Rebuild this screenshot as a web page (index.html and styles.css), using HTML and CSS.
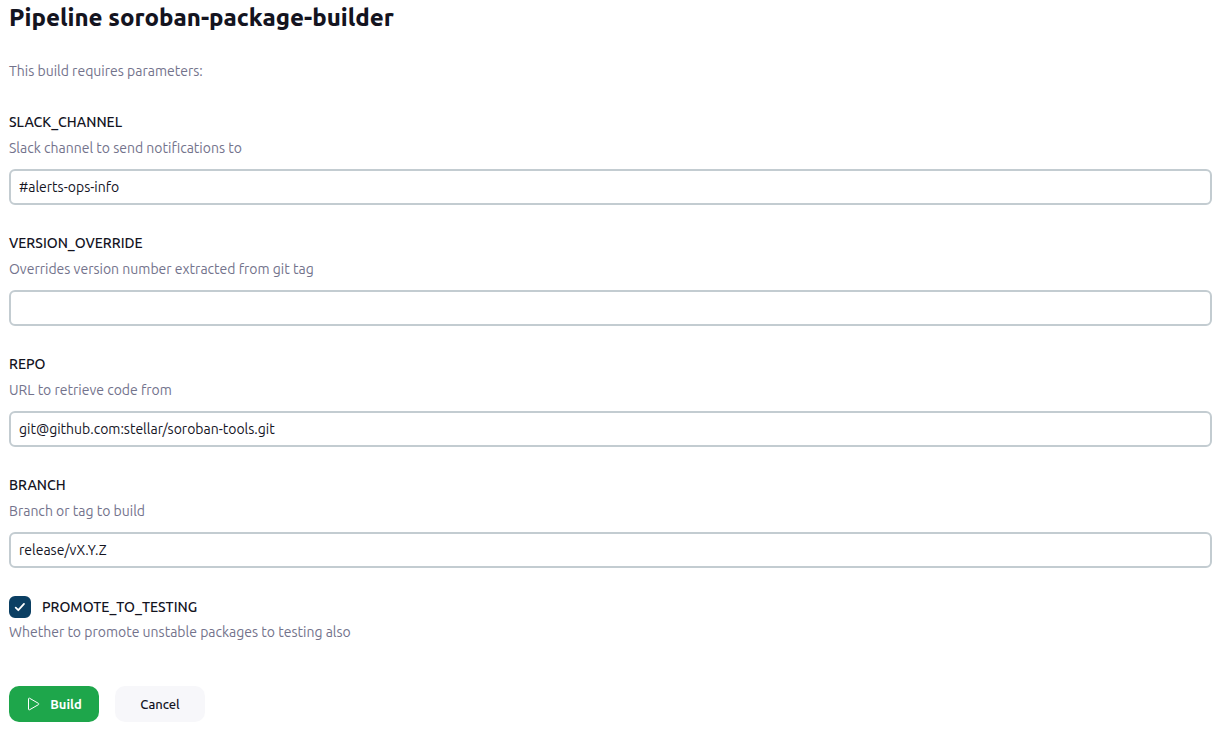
FILE: index.html
```html
<!DOCTYPE html>
<html lang="en">
<head>
<meta charset="utf-8">
<meta name="viewport" content="width=device-width, initial-scale=1">
<title>Pipeline soroban-package-builder</title>
<link rel="stylesheet" href="styles.css">
</head>
<body>
<main class="page">
  <h1 class="title">Pipeline soroban-package-builder</h1>
  <p class="intro">This build requires parameters:</p>
  <form class="form">
    <div class="field">
      <label class="label" for="slack">SLACK_CHANNEL</label>
      <p class="description" id="slack-help">Slack channel to send notifications to</p>
      <input class="input" id="slack" type="text" value="#alerts-ops-info" aria-describedby="slack-help">
    </div>
    <div class="field">
      <label class="label" for="version">VERSION_OVERRIDE</label>
      <p class="description" id="version-help">Overrides version number extracted from git tag</p>
      <input class="input" id="version" type="text" aria-describedby="version-help">
    </div>
    <div class="field">
      <label class="label" for="repo">REPO</label>
      <p class="description" id="repo-help">URL to retrieve code from</p>
      <input class="input" id="repo" type="text" value="git@github.com:stellar/soroban-tools.git" aria-describedby="repo-help">
    </div>
    <div class="field">
      <label class="label" for="branch">BRANCH</label>
      <p class="description" id="branch-help">Branch or tag to build</p>
      <input class="input" id="branch" type="text" value="release/vX.Y.Z" aria-describedby="branch-help">
    </div>
    <div class="check-field">
      <div class="check-row">
        <span class="check">
          <input class="check-input" id="promote" type="checkbox" checked aria-describedby="promote-help">
          <svg class="check-mark" viewBox="0 0 22 22" aria-hidden="true"><path d="M6.700 11.700 9.300 14.200 15 7.900"/></svg>
        </span>
        <label class="label" for="promote">PROMOTE_TO_TESTING</label>
      </div>
      <p class="description" id="promote-help">Whether to promote unstable packages to testing also</p>
    </div>
    <div class="actions">
      <button class="button button-primary" type="button">
        <svg class="play" viewBox="0 0 14 14" aria-hidden="true"><path d="M2.500 1.800v10.400c0 .6.5.8 1 .6l9-5.200c.5-.3.5-.9 0-1.200L3.500 1.200c-.5-.3-1 0-1 .6Z"/></svg>
        Build
      </button>
      <button class="button" type="button">Cancel</button>
    </div>
  </form>
</main>
</body>
</html>
```
FILE: styles.css
```css
* { box-sizing: border-box; }

body {
  margin: 0;
  background: #fff;
  color: #14141f;
  font-family: Ubuntu, "Noto Sans", "Open Sans", sans-serif;
  font-size: 14px;
  line-height: 22px;
}

.page { padding: 2px 14px 11px 9px; }

.title {
  margin: 0 0 26px;
  font-size: 24px;
  font-weight: 800;
  line-height: 32px;
}

.intro,
.description {
  margin: 0;
  color: #73738c;
}

.form {
  display: flex;
  flex-direction: column;
  gap: 27px;
  margin-top: 29px;
}

.field { display: flex; flex-direction: column; }

.label { font-weight: 550; }

.field .label { margin-bottom: 4px; align-self: flex-start; }

.input {
  width: 100%;
  height: 36px;
  margin-top: 10px;
  padding: 0 8px;
  border: 2px solid #c3ccd1;
  border-radius: 6px;
  background: #fff;
  color: inherit;
  font: inherit;
}

.check-field {
  display: flex;
  flex-direction: column;
  gap: 3px;
  margin-top: 1px;
}

.check-row { display: flex; align-items: center; gap: 11px; }

.check { display: grid; width: 22px; height: 22px; }

.check-input,
.check-mark { grid-area: 1 / 1; width: 22px; height: 22px; margin: 0; }

.check-input {
  appearance: none;
  border: 2px solid #c3ccd1;
  border-radius: 6px;
}

.check-input:checked { border-color: #0b3f63; background: #0b3f63; }

.check-mark {
  visibility: hidden;
  fill: none;
  stroke: #fff;
  stroke-width: 1.8;
  stroke-linecap: round;
  stroke-linejoin: round;
  pointer-events: none;
}

.check-input:checked + .check-mark { visibility: visible; }

.actions { display: flex; gap: 16px; margin-top: 16px; }

.button {
  display: flex;
  align-items: center;
  justify-content: center;
  gap: 10px;
  min-width: 90px;
  height: 36px;
  padding: 0 16px;
  border: 0;
  border-radius: 10px;
  background: #f7f7fa;
  color: inherit;
  font: inherit;
  font-size: 13px;
  font-weight: 550;
}

.button-primary { background: #1ea64b; color: #fff; font-weight: 700; }

.play {
  width: 14px;
  height: 14px;
  fill: none;
  stroke: currentColor;
  stroke-width: 1;
  stroke-linejoin: round;
}
```
